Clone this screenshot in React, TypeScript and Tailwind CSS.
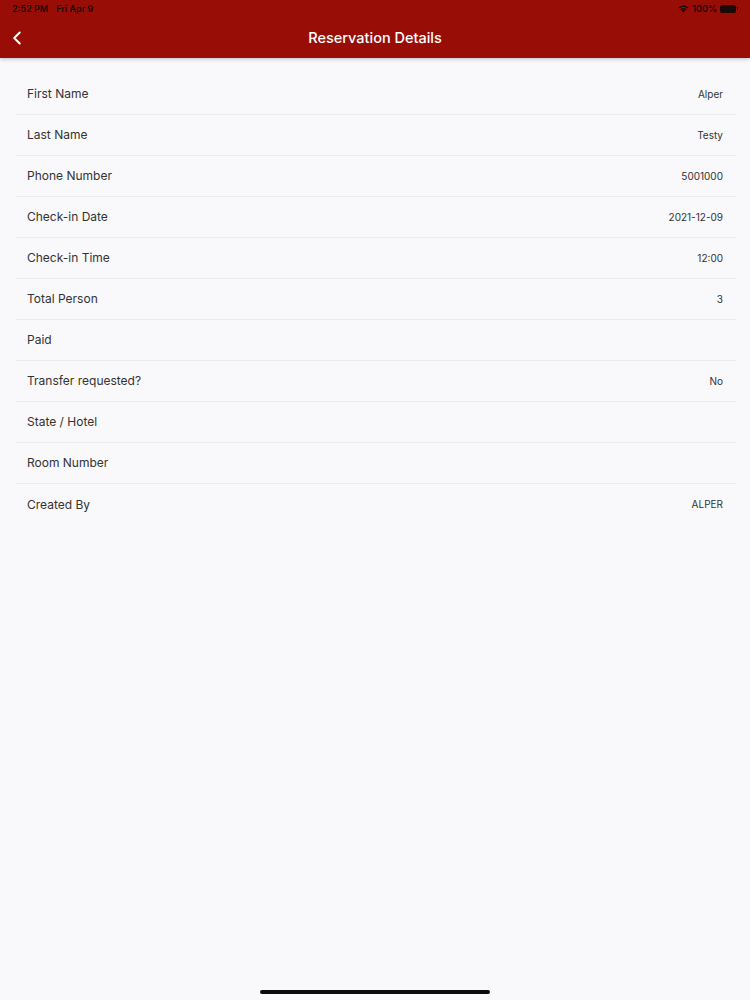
import React from 'react';
import { ChevronLeft } from 'lucide-react';

const rows: { label: string; value: string }[] = [
    { label: 'First Name', value: 'Alper' },
    { label: 'Last Name', value: 'Testy' },
    { label: 'Phone Number', value: '5001000' },
    { label: 'Check-in Date', value: '2021-12-09' },
    { label: 'Check-in Time', value: '12:00' },
    { label: 'Total Person', value: '3' },
    { label: 'Paid', value: '' },
    { label: 'Transfer requested?', value: 'No' },
    { label: 'State / Hotel', value: '' },
    { label: 'Room Number', value: '' },
    { label: 'Created By', value: 'ALPER' },
];

export default function App() {
    return (
        <div
            className="relative h-[1000px] w-[750px] overflow-hidden bg-[#f9f8fb]"
            style={{ fontFamily: 'Inter, "Noto Sans", sans-serif' }}
        >
            <header className="relative z-10 h-[58px] bg-[#980e06] shadow-[0_1px_4px_rgba(0,0,0,0.25)]">
                <div className="flex h-[17px] items-center justify-between px-[12px] text-[9px] font-semibold text-[#1a0a08]">
                    <div className="flex gap-[8px]">
                        <span>2:52 PM</span>
                        <span>Fri Apr 9</span>
                    </div>
                    <div className="flex items-center gap-[3px]">
                        <svg width="11" height="8" viewBox="0 0 11 8">
                            <path d="M5.5 7.6 3.7 5.7a2.6 2.6 0 0 1 3.6 0Z" fill="#1a0a08" />
                            <path d="M2.4 4.4a4.4 4.4 0 0 1 6.2 0l-.9.9a3.1 3.1 0 0 0-4.4 0Z" fill="#1a0a08" />
                            <path d="M.6 2.6a7 7 0 0 1 9.8 0l-.9.9a5.7 5.7 0 0 0-8 0Z" fill="#1a0a08" />
                        </svg>
                        <span>100%</span>
                        <div className="flex items-center">
                            <div className="h-[8px] w-[16px] rounded-[2px] bg-[#1a0a08]" />
                            <div className="ml-[1px] h-[3px] w-[1px] bg-[#1a0a08]" />
                        </div>
                    </div>
                </div>
                <div className="relative flex h-[41px] items-center justify-center">
                    <ChevronLeft className="absolute left-[6px] text-white" size={22} strokeWidth={2.2} />
                    <h1 className="text-[14.5px] font-medium text-white">Reservation Details</h1>
                </div>
            </header>

            <main className="pl-[16px] pr-[14px] pt-[16px]">
                {rows.map((row, i) => (
                    <div
                        key={row.label}
                        className={`flex h-[41px] items-center justify-between pl-[11px] pr-[13px] ${
                            i < rows.length - 1 ? 'border-b border-[#ecebef]' : ''
                        }`}
                    >
                        <span className="text-[12px] text-[#333333]">{row.label}</span>
                        <span className="text-[10px] text-[#333333]">{row.value}</span>
                    </div>
                ))}
            </main>

            <div className="absolute bottom-[6px] left-[260px] h-[4px] w-[230px] rounded-full bg-[#0a0a0a]" />
        </div>
    );
}
